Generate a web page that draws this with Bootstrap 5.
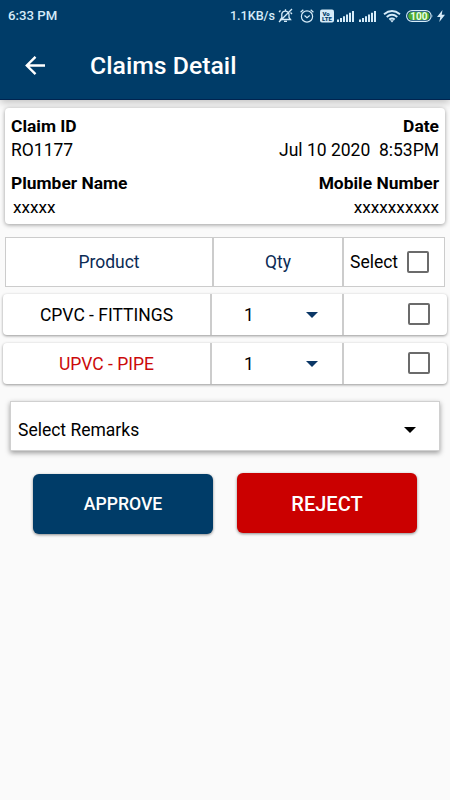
<!DOCTYPE html>
<html lang="en">
<head>
<meta charset="utf-8">
<meta name="viewport" content="width=device-width, initial-scale=1">
<title>Claims Detail</title>
<link href="https://cdn.jsdelivr.net/npm/bootstrap@5.3.0/dist/css/bootstrap.min.css" rel="stylesheet">
<style>
  body { font-family: Roboto, sans-serif; font-size: 17.5px; line-height: 24px; background: #fafafa; color: #000; min-height: 800px; overflow: hidden; }
  .app-head { background: #003c68; height: 100px; color: #fff; box-shadow: 0 3px 8px rgba(0,0,0,.22); border-bottom: 1px solid #002450; }
  .status { height: 31px; color: #d5ebf8; font-weight: 500; font-size: 13.2px; line-height: 31px; padding-left: 8px; padding-right: 5px; }
  .status svg { flex: none; }
  .rate { font-size: 12.6px; margin-right: 3px; }
  .alarm { margin-left: 7px; }
  .volte { margin-left: 6px; }
  .sig { margin-left: 3px; }
  .sig2 { margin-left: 5px; }
  .wifi { margin-left: 7px; }
  .batt { margin-left: 5px; }
  .bolt { margin-left: 4px; }
  .title-row { height: 69px; padding-left: 25px; }
  .title-row h1 { font-size: 24.8px; font-weight: 500; margin-left: 45px; line-height: 30px; padding-top: 1px; }
  .info { margin: 8px 5px 0; height: 116px; border-radius: 4px; padding: 6px 6px 0; box-shadow: 0 1px 4px rgba(0,0,0,.38); }
  .info dl { font-size: 17.5px; }
  .info dt { font-size: 17.4px; font-weight: 700; line-height: 24px; }
  .info dd { line-height: 24px; margin: 0 0 9px; }
  .info .masked { font-size: 17.2px; }
  .info .indent { padding-left: 2px; }
  .grid-head { margin: 13px 5px 0; height: 50px; border: 1px solid #ccc; }
  .item { margin: 7px 3px 0; height: 41px; border-radius: 4px; box-shadow: 0 1px 3px rgba(0,0,0,.4); }
  .item + .item { margin-top: 8px; }
  .c-product { width: 209px; border-right: 2px solid #ccc; }
  .c-qty { width: 132px; border-right: 2px solid #ccc; }
  .grid-head .c-product { width: 208px; }
  .grid-head .c-qty { width: 130px; }
  .navy { color: #0b2b55; }
  .danger-text { color: #cb0a0a; }
  .tick.form-check-input { width: 22px; height: 22px; border: 2px solid #6b6b6b; border-radius: 2px; margin: 0; background: #fff; }
  .item .tick { margin-right: 17px; position: relative; top: -1px; }
  .grid-head .tick { margin-right: 15px; }
  .sel { margin-left: 2px; }
  .caret { width: 0; height: 0; border: 6px solid transparent; border-top-color: #0b3766; border-bottom: 0; }
  .item .caret { margin-left: 52px; }
  .item .qty { margin-left: 32px; }
  .remarks { margin: 17px 10px 0; height: 50px; border: 1px solid #d0d0d0; box-shadow: 0 2px 5px rgba(0,0,0,.38); padding: 7px 23px 0 7px; }
  .remarks .caret { border-top-color: #000; }
  .actions { margin: 22px 33px 0; }
  .action { width: 180px; height: 60px; border: 0; border-radius: 6px; color: #fff; font-weight: 500; box-shadow: 0 1px 3px rgba(0,0,0,.45); padding: 0; }
  .approve { background: #003c68; font-size: 17.6px; margin-top: 1px; }
  .reject { background: #cb0000; font-size: 20px; padding-top: 1px; }
</style>
<script src="https://cdn.jsdelivr.net/npm/bootstrap@5.3.0/dist/js/bootstrap.bundle.min.js"></script>
</head>
<body>
<header class="app-head">
  <div class="status d-flex align-items-center">
    <span>6:33 PM</span>
    <span class="ms-auto rate">1.1KB/s</span>
    <svg width="15" height="15" viewBox="0 0 15 15" fill="none" stroke="#d5ebf8" stroke-width="1.3"><path d="M2.500 11.500h10L11 9.500V6.500a3.700 3.700 0 0 0-7.200-.8V9.500zM6 13.300h3M7.500 1.200v1.200M1 14 14 1M1 4l1.500-1.500M12.500 4.500 14 6"/></svg>
    <svg class="alarm" width="14" height="14" viewBox="0 0 14 14" fill="none" stroke="#d5ebf8" stroke-width="1.2"><circle cx="7" cy="7.500" r="5.600"/><path d="M4.500 6.500 7 8.700l2.700-2.200M.6 3.300 3.300.8M13.400 3.300 10.700.8"/></svg>
    <svg class="volte" width="14" height="14" viewBox="0 0 14 14"><rect y=".5" width="14" height="13" rx="2" fill="#d5ebf8"/><g fill="#003c68" font-family="Roboto, sans-serif" font-weight="900" font-size="6" text-anchor="middle"><text x="6" y="6.500">Vo</text><text x="7" y="12.300">LTE</text></g></svg>
    <svg class="sig" width="17" height="14" viewBox="0 0 17 14" fill="#d5ebf8"><path d="M0 10.500h2V13H0zM3 9h2v4H3zM6 7.300h2V13H6zM9 5.500h2V13H9zM12 3.700h2V13h-2zM15 2h2v11h-2z"/></svg>
    <svg class="sig2" width="17" height="14" viewBox="0 0 17 14" fill="#d5ebf8"><path d="M0 10.500h2V13H0zM3 9h2v4H3zM6 7.300h2V13H6zM9 5.500h2V13H9zM12 3.700h2V13h-2zM15 2h2v11h-2z"/></svg>
    <svg class="wifi" width="18" height="14" viewBox="0 0 18 14" fill="none" stroke="#d5ebf8" stroke-width="1.9"><path d="M1 5.200q8-6.500 16 0M3.700 8q5.300-4.300 10.600 0M6.300 10.500q2.700-2.200 5.400 0"/><path d="M7 11.200h4L9 13.500z" fill="#d5ebf8" stroke="none"/></svg>
    <svg class="batt" width="27" height="12" viewBox="0 0 27 12"><rect x=".6" y=".6" width="24.500" height="10.800" rx="5.400" fill="#003c68" stroke="#d5ebf8" stroke-width="1.100"/><rect x="2.200" y="2" width="21.300" height="8" rx="4" fill="#4faa32"/><path d="M25.800 4q1.200 2 0 4z" fill="#d5ebf8"/><text x="12.900" y="9.600" text-anchor="middle" font-family="Roboto, sans-serif" font-size="10" font-weight="700" fill="#eaffe7">100</text></svg>
    <svg class="bolt" width="8" height="12" viewBox="0 0 8 12" fill="#d5ebf8"><path d="M5.500 0 0 7h3.300L2.300 12 8 4.700H4.700z"/></svg>
  </div>
  <div class="title-row d-flex align-items-center">
    <svg width="20" height="20" viewBox="0 0 20 20" fill="none" stroke="#fff" stroke-width="2.400"><path d="M20 9.500H2M10.500.8 1.800 9.500l8.700 8.700"/></svg>
    <h1 class="mb-0">Claims Detail</h1>
  </div>
</header>

<main>
  <section class="info bg-white d-flex justify-content-between">
    <dl class="mb-0">
      <dt>Claim ID</dt><dd>RO1177</dd>
      <dt>Plumber Name</dt><dd class="masked indent">xxxxx</dd>
    </dl>
    <dl class="mb-0 text-end">
      <dt>Date</dt><dd>Jul 10 2020&nbsp; 8:53PM</dd>
      <dt>Mobile Number</dt><dd class="masked">xxxxxxxxxx</dd>
    </dl>
  </section>

  <section>
    <div class="grid-head bg-white d-flex">
      <div class="c-product navy d-flex align-items-center justify-content-center">Product</div>
      <div class="c-qty navy d-flex align-items-center justify-content-center">Qty</div>
      <label class="flex-grow-1 d-flex align-items-center justify-content-between ps-1"><span class="sel">Select</span><input class="tick form-check-input" type="checkbox"></label>
    </div>
    <div class="item bg-white d-flex">
      <div class="c-product d-flex align-items-center justify-content-center">CPVC - FITTINGS</div>
      <div class="c-qty d-flex align-items-center"><span class="qty">1</span><span class="caret"></span></div>
      <div class="flex-grow-1 d-flex align-items-center justify-content-end"><input class="tick form-check-input" type="checkbox" aria-label="Select CPVC fittings"></div>
    </div>
    <div class="item bg-white d-flex">
      <div class="c-product danger-text d-flex align-items-center justify-content-center">UPVC - PIPE</div>
      <div class="c-qty d-flex align-items-center"><span class="qty">1</span><span class="caret"></span></div>
      <div class="flex-grow-1 d-flex align-items-center justify-content-end"><input class="tick form-check-input" type="checkbox" aria-label="Select UPVC pipe"></div>
    </div>
  </section>

  <div class="remarks bg-white d-flex align-items-center justify-content-between" role="button"><span>Select Remarks</span><span class="caret"></span></div>

  <div class="actions d-flex justify-content-between">
    <button type="button" class="btn action approve">APPROVE</button>
    <button type="button" class="btn action reject">REJECT</button>
  </div>
</main>
</body>
</html>
